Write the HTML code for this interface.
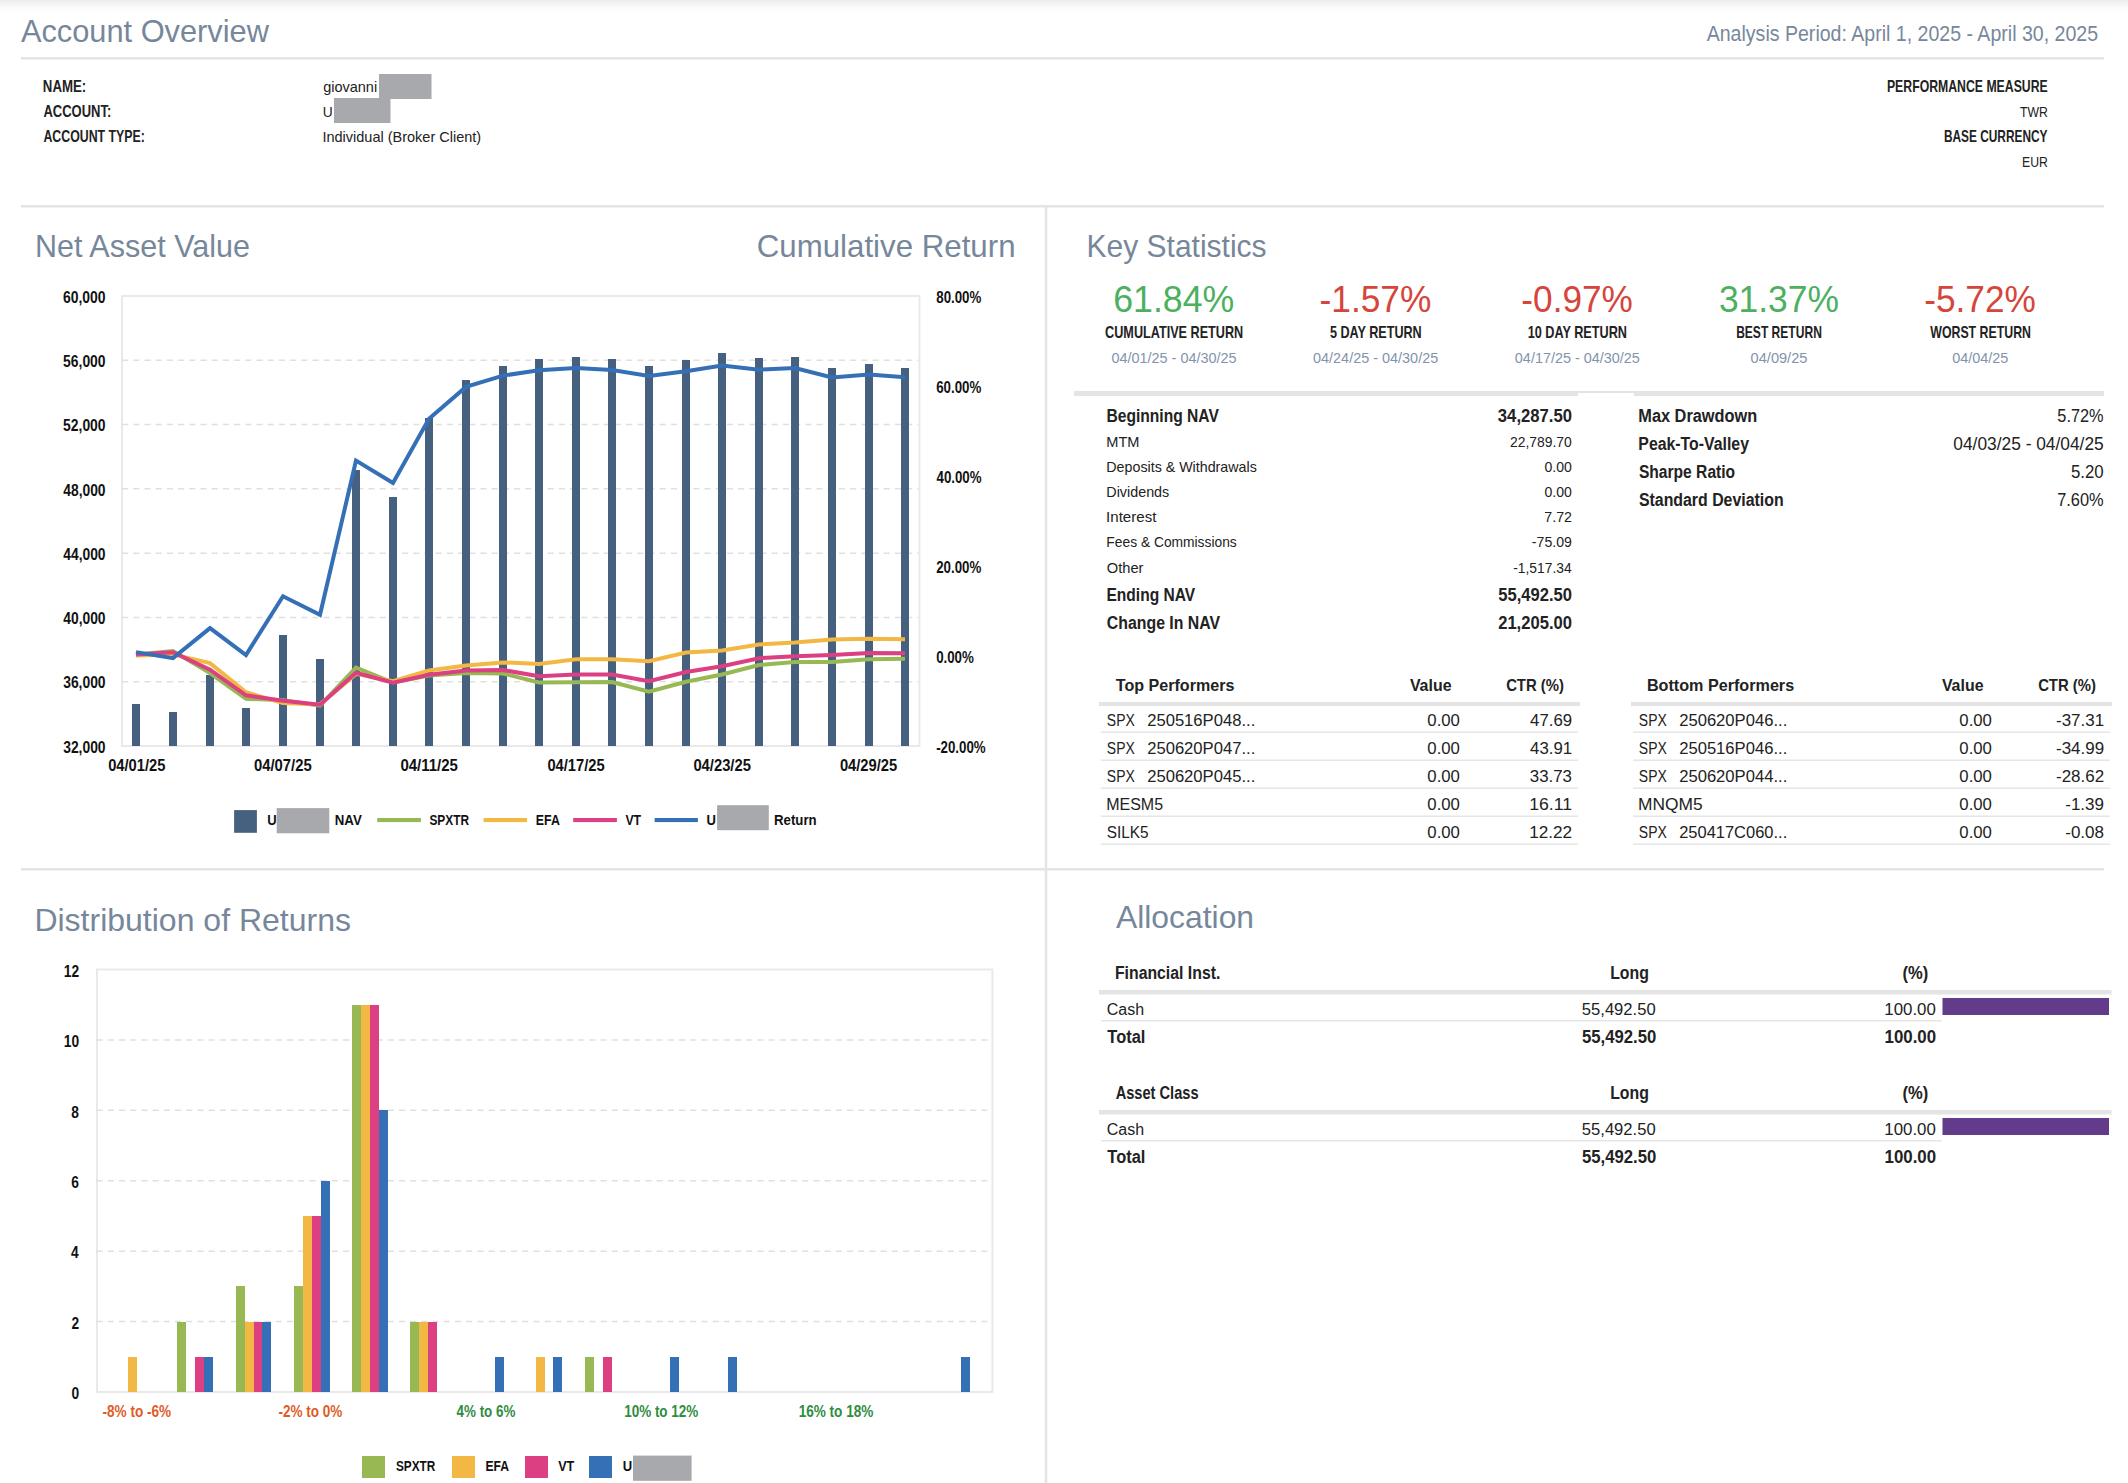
<!DOCTYPE html>
<html><head><meta charset="utf-8"><title>Account Overview</title>
<style>
html,body{margin:0;padding:0;background:#fff;}
body{width:2128px;height:1483px;overflow:hidden;position:relative;}
.shadow{position:absolute;left:0;top:0;width:2128px;height:14px;background:linear-gradient(#ededed,#f5f5f5 30%,#fbfbfb 55%,#ffffff);}
svg{position:absolute;left:0;top:0;}
text{font-family:"Liberation Sans",sans-serif;}
</style></head>
<body>
<div class="shadow"></div>
<svg width="2128" height="1483" viewBox="0 0 2128 1483">
<text x="20.94" y="42.00" font-size="32" fill="#77879b" textLength="247.98" lengthAdjust="spacingAndGlyphs">Account Overview</text>
<text x="1706.71" y="41.00" font-size="21.5" fill="#77879b" textLength="391.35" lengthAdjust="spacingAndGlyphs">Analysis Period: April 1, 2025 - April 30, 2025</text>
<rect x="21.00" y="57.00" width="2083.00" height="2.50" fill="#e4e4e4"/>
<text x="42.86" y="92.00" font-size="16.5" font-weight="bold" fill="#222222" textLength="43.41" lengthAdjust="spacingAndGlyphs">NAME:</text>
<text x="43.43" y="117.00" font-size="16.5" font-weight="bold" fill="#222222" textLength="67.79" lengthAdjust="spacingAndGlyphs">ACCOUNT:</text>
<text x="43.44" y="142.00" font-size="16.5" font-weight="bold" fill="#222222" textLength="101.49" lengthAdjust="spacingAndGlyphs">ACCOUNT TYPE:</text>
<text x="323.14" y="92.00" font-size="14.5" fill="#222222">giovanni</text>
<text x="322.69" y="117.00" font-size="14.5" fill="#222222" textLength="9.95" lengthAdjust="spacingAndGlyphs">U</text>
<text x="322.41" y="142.00" font-size="14.5" fill="#222222">Individual (Broker Client)</text>
<rect x="379.00" y="74.00" width="52.50" height="25.00" fill="#a8a9ac"/>
<rect x="334.00" y="98.00" width="56.50" height="25.00" fill="#a8a9ac"/>
<text x="1886.93" y="92.00" font-size="16.5" font-weight="bold" fill="#222222" textLength="160.80" lengthAdjust="spacingAndGlyphs">PERFORMANCE MEASURE</text>
<text x="2019.98" y="117.00" font-size="14.5" fill="#222222" textLength="27.84" lengthAdjust="spacingAndGlyphs">TWR</text>
<text x="1943.96" y="142.00" font-size="16.5" font-weight="bold" fill="#222222" textLength="103.48" lengthAdjust="spacingAndGlyphs">BASE CURRENCY</text>
<text x="2022.00" y="167.00" font-size="14.5" fill="#222222" textLength="25.82" lengthAdjust="spacingAndGlyphs">EUR</text>
<rect x="21.00" y="205.00" width="2083.00" height="2.50" fill="#e4e4e4"/>
<rect x="1044.75" y="207.00" width="2.50" height="1276.00" fill="#e4e4e4"/>
<rect x="21.00" y="868.00" width="2083.00" height="2.50" fill="#e4e4e4"/>
<text x="35.04" y="257.25" font-size="32" fill="#77879b" textLength="215.04" lengthAdjust="spacingAndGlyphs">Net Asset Value</text>
<text x="756.71" y="257.25" font-size="32" fill="#77879b" textLength="258.82" lengthAdjust="spacingAndGlyphs">Cumulative Return</text>
<rect x="122" y="296" width="797.5" height="450" fill="none" stroke="#e8e8e8" stroke-width="1.9"/>
<line x1="122.00" y1="360.29" x2="918.50" y2="360.29" stroke="#e0e0e0" stroke-width="1.5" stroke-dasharray="6.2 5"/>
<line x1="122.00" y1="424.57" x2="918.50" y2="424.57" stroke="#e0e0e0" stroke-width="1.5" stroke-dasharray="6.2 5"/>
<line x1="122.00" y1="488.86" x2="918.50" y2="488.86" stroke="#e0e0e0" stroke-width="1.5" stroke-dasharray="6.2 5"/>
<line x1="122.00" y1="553.14" x2="918.50" y2="553.14" stroke="#e0e0e0" stroke-width="1.5" stroke-dasharray="6.2 5"/>
<line x1="122.00" y1="617.43" x2="918.50" y2="617.43" stroke="#e0e0e0" stroke-width="1.5" stroke-dasharray="6.2 5"/>
<line x1="122.00" y1="681.71" x2="918.50" y2="681.71" stroke="#e0e0e0" stroke-width="1.5" stroke-dasharray="6.2 5"/>
<text x="62.99" y="302.70" font-size="16" font-weight="bold" fill="#111111" textLength="42.58" lengthAdjust="spacingAndGlyphs">60,000</text>
<text x="63.07" y="366.99" font-size="16" font-weight="bold" fill="#111111" textLength="42.50" lengthAdjust="spacingAndGlyphs">56,000</text>
<text x="63.07" y="431.27" font-size="16" font-weight="bold" fill="#111111" textLength="42.50" lengthAdjust="spacingAndGlyphs">52,000</text>
<text x="63.29" y="495.56" font-size="16" font-weight="bold" fill="#111111" textLength="42.28" lengthAdjust="spacingAndGlyphs">48,000</text>
<text x="63.29" y="559.84" font-size="16" font-weight="bold" fill="#111111" textLength="42.28" lengthAdjust="spacingAndGlyphs">44,000</text>
<text x="63.29" y="624.13" font-size="16" font-weight="bold" fill="#111111" textLength="42.28" lengthAdjust="spacingAndGlyphs">40,000</text>
<text x="63.18" y="688.41" font-size="16" font-weight="bold" fill="#111111" textLength="42.39" lengthAdjust="spacingAndGlyphs">36,000</text>
<text x="63.18" y="752.70" font-size="16" font-weight="bold" fill="#111111" textLength="42.39" lengthAdjust="spacingAndGlyphs">32,000</text>
<text x="936.28" y="302.70" font-size="16" font-weight="bold" fill="#111111" textLength="45.04" lengthAdjust="spacingAndGlyphs">80.00%</text>
<text x="936.21" y="392.70" font-size="16" font-weight="bold" fill="#111111" textLength="45.04" lengthAdjust="spacingAndGlyphs">60.00%</text>
<text x="936.50" y="482.70" font-size="16" font-weight="bold" fill="#111111" textLength="45.04" lengthAdjust="spacingAndGlyphs">40.00%</text>
<text x="936.24" y="572.70" font-size="16" font-weight="bold" fill="#111111" textLength="45.04" lengthAdjust="spacingAndGlyphs">20.00%</text>
<text x="936.17" y="662.70" font-size="16" font-weight="bold" fill="#111111" textLength="37.65" lengthAdjust="spacingAndGlyphs">0.00%</text>
<text x="936.18" y="752.70" font-size="16" font-weight="bold" fill="#111111" textLength="49.46" lengthAdjust="spacingAndGlyphs">-20.00%</text>
<rect x="132.00" y="704.00" width="8.00" height="42.00" fill="#46617f"/>
<rect x="169.00" y="712.00" width="8.00" height="34.00" fill="#46617f"/>
<rect x="206.00" y="675.00" width="8.00" height="71.00" fill="#46617f"/>
<rect x="242.00" y="708.00" width="8.00" height="38.00" fill="#46617f"/>
<rect x="279.00" y="635.00" width="8.00" height="111.00" fill="#46617f"/>
<rect x="316.00" y="659.00" width="8.00" height="87.00" fill="#46617f"/>
<rect x="352.00" y="470.00" width="8.00" height="276.00" fill="#46617f"/>
<rect x="389.00" y="497.00" width="8.00" height="249.00" fill="#46617f"/>
<rect x="425.00" y="418.00" width="8.00" height="328.00" fill="#46617f"/>
<rect x="462.00" y="380.00" width="8.00" height="366.00" fill="#46617f"/>
<rect x="499.00" y="366.00" width="8.00" height="380.00" fill="#46617f"/>
<rect x="535.00" y="359.00" width="8.00" height="387.00" fill="#46617f"/>
<rect x="572.00" y="357.00" width="8.00" height="389.00" fill="#46617f"/>
<rect x="608.00" y="359.00" width="8.00" height="387.00" fill="#46617f"/>
<rect x="645.00" y="366.00" width="8.00" height="380.00" fill="#46617f"/>
<rect x="682.00" y="360.00" width="8.00" height="386.00" fill="#46617f"/>
<rect x="718.00" y="353.00" width="8.00" height="393.00" fill="#46617f"/>
<rect x="755.00" y="358.00" width="8.00" height="388.00" fill="#46617f"/>
<rect x="791.00" y="357.00" width="8.00" height="389.00" fill="#46617f"/>
<rect x="828.00" y="368.00" width="8.00" height="378.00" fill="#46617f"/>
<rect x="865.00" y="364.00" width="8.00" height="382.00" fill="#46617f"/>
<rect x="901.00" y="368.00" width="8.00" height="378.00" fill="#46617f"/>
<polyline points="136.00,654.40 173.00,651.00 210.00,673.10 246.00,698.75 283.00,700.25 320.00,705.60 356.00,667.60 393.00,682.50 429.00,675.60 466.00,673.10 503.00,673.50 539.00,682.50 576.00,682.25 612.00,682.00 649.00,691.75 686.00,681.75 722.00,674.50 759.00,665.00 795.00,662.00 832.00,662.00 869.00,659.25 905.00,658.75" fill="none" stroke="#97b853" stroke-width="4" stroke-linejoin="miter" stroke-miterlimit="10" stroke-linecap="butt"/>
<polyline points="136.00,655.60 173.00,654.40 210.00,663.10 246.00,692.25 283.00,703.10 320.00,704.40 356.00,673.90 393.00,681.25 429.00,670.40 466.00,665.60 503.00,662.40 539.00,663.90 576.00,659.30 612.00,659.25 649.00,661.25 686.00,652.50 722.00,650.50 759.00,644.50 795.00,642.50 832.00,639.50 869.00,638.75 905.00,639.25" fill="none" stroke="#f2b843" stroke-width="4" stroke-linejoin="miter" stroke-miterlimit="10" stroke-linecap="butt"/>
<polyline points="136.00,654.60 173.00,652.25 210.00,669.70 246.00,695.30 283.00,700.75 320.00,704.75 356.00,672.80 393.00,682.80 429.00,674.75 466.00,670.50 503.00,670.00 539.00,676.25 576.00,674.45 612.00,674.50 649.00,681.25 686.00,672.00 722.00,666.25 759.00,658.25 795.00,656.25 832.00,655.00 869.00,653.00 905.00,653.25" fill="none" stroke="#dc3f82" stroke-width="4" stroke-linejoin="miter" stroke-miterlimit="10" stroke-linecap="butt"/>
<polyline points="136.00,652.10 173.00,658.10 210.00,628.10 246.00,655.00 283.00,596.25 320.00,614.75 356.00,460.60 393.00,483.00 429.00,418.75 466.00,386.90 503.00,375.60 539.00,370.25 576.00,368.10 612.00,370.00 649.00,376.00 686.00,371.25 722.00,365.60 759.00,369.75 795.00,368.10 832.00,377.50 869.00,374.40 905.00,377.25" fill="none" stroke="#3570b7" stroke-width="4" stroke-linejoin="miter" stroke-miterlimit="10" stroke-linecap="butt"/>
<text x="108.17" y="770.50" font-size="16" font-weight="bold" fill="#111111" textLength="57.24" lengthAdjust="spacingAndGlyphs">04/01/25</text>
<text x="253.91" y="770.50" font-size="16" font-weight="bold" fill="#111111" textLength="57.75" lengthAdjust="spacingAndGlyphs">04/07/25</text>
<text x="400.42" y="770.50" font-size="16" font-weight="bold" fill="#111111" textLength="57.50" lengthAdjust="spacingAndGlyphs">04/11/25</text>
<text x="547.42" y="770.50" font-size="16" font-weight="bold" fill="#111111" textLength="57.24" lengthAdjust="spacingAndGlyphs">04/17/25</text>
<text x="693.42" y="770.50" font-size="16" font-weight="bold" fill="#111111" textLength="57.50" lengthAdjust="spacingAndGlyphs">04/23/25</text>
<text x="839.92" y="770.50" font-size="16" font-weight="bold" fill="#111111" textLength="57.24" lengthAdjust="spacingAndGlyphs">04/29/25</text>
<rect x="234.10" y="810.10" width="22.80" height="22.70" fill="#46617f"/>
<text x="267.22" y="824.60" font-size="14.5" font-weight="bold" fill="#111111" textLength="9.42" lengthAdjust="spacingAndGlyphs">U</text>
<rect x="276.70" y="808.10" width="52.60" height="25.20" fill="#a8a9ac"/>
<text x="334.74" y="824.60" font-size="14.5" font-weight="bold" fill="#111111" textLength="27.04" lengthAdjust="spacingAndGlyphs">NAV</text>
<rect x="377.20" y="818.00" width="43.70" height="4.10" fill="#97b853"/>
<text x="429.46" y="824.60" font-size="14.5" font-weight="bold" fill="#111111" textLength="39.59" lengthAdjust="spacingAndGlyphs">SPXTR</text>
<rect x="483.60" y="818.00" width="43.40" height="4.10" fill="#f2b843"/>
<text x="535.80" y="824.60" font-size="14.5" font-weight="bold" fill="#111111" textLength="24.02" lengthAdjust="spacingAndGlyphs">EFA</text>
<rect x="573.20" y="818.00" width="43.70" height="4.10" fill="#dc3f82"/>
<text x="625.42" y="824.60" font-size="14.5" font-weight="bold" fill="#111111" textLength="15.72" lengthAdjust="spacingAndGlyphs">VT</text>
<rect x="654.60" y="818.00" width="43.30" height="4.10" fill="#3570b7"/>
<text x="706.42" y="824.60" font-size="14.5" font-weight="bold" fill="#111111" textLength="9.42" lengthAdjust="spacingAndGlyphs">U</text>
<rect x="717.10" y="805.20" width="51.70" height="25.00" fill="#a8a9ac"/>
<text x="774.02" y="824.60" font-size="14.5" font-weight="bold" fill="#111111" textLength="42.60" lengthAdjust="spacingAndGlyphs">Return</text>
<text x="1086.54" y="257.00" font-size="32" fill="#77879b" textLength="180.04" lengthAdjust="spacingAndGlyphs">Key Statistics</text>
<text x="1113.19" y="312.25" font-size="37.5" fill="#4cb060" textLength="121.09" lengthAdjust="spacingAndGlyphs">61.84%</text>
<text x="1105.11" y="338.00" font-size="15.75" font-weight="bold" fill="#222222" textLength="138.11" lengthAdjust="spacingAndGlyphs">CUMULATIVE RETURN</text>
<text x="1111.44" y="363.00" font-size="14.5" fill="#8393ab" textLength="125.17" lengthAdjust="spacingAndGlyphs">04/01/25 - 04/30/25</text>
<text x="1319.53" y="312.25" font-size="37.5" fill="#d6453b" textLength="111.83" lengthAdjust="spacingAndGlyphs">-1.57%</text>
<text x="1329.92" y="338.00" font-size="15.75" font-weight="bold" fill="#222222" textLength="91.82" lengthAdjust="spacingAndGlyphs">5 DAY RETURN</text>
<text x="1313.04" y="363.00" font-size="14.5" fill="#8393ab" textLength="125.17" lengthAdjust="spacingAndGlyphs">04/24/25 - 04/30/25</text>
<text x="1521.36" y="312.25" font-size="37.5" fill="#d6453b" textLength="111.57" lengthAdjust="spacingAndGlyphs">-0.97%</text>
<text x="1527.64" y="338.00" font-size="15.75" font-weight="bold" fill="#222222" textLength="99.38" lengthAdjust="spacingAndGlyphs">10 DAY RETURN</text>
<text x="1514.86" y="363.00" font-size="14.5" fill="#8393ab" textLength="124.92" lengthAdjust="spacingAndGlyphs">04/17/25 - 04/30/25</text>
<text x="1718.90" y="312.25" font-size="37.5" fill="#4cb060" textLength="120.11" lengthAdjust="spacingAndGlyphs">31.37%</text>
<text x="1736.14" y="338.00" font-size="15.75" font-weight="bold" fill="#222222" textLength="85.72" lengthAdjust="spacingAndGlyphs">BEST RETURN</text>
<text x="1750.63" y="363.00" font-size="14.5" fill="#8393ab" textLength="56.78" lengthAdjust="spacingAndGlyphs">04/09/25</text>
<text x="1924.23" y="312.25" font-size="37.5" fill="#d6453b" textLength="111.62" lengthAdjust="spacingAndGlyphs">-5.72%</text>
<text x="1930.24" y="338.00" font-size="15.75" font-weight="bold" fill="#222222" textLength="100.74" lengthAdjust="spacingAndGlyphs">WORST RETURN</text>
<text x="1952.14" y="363.00" font-size="14.5" fill="#8393ab" textLength="56.17" lengthAdjust="spacingAndGlyphs">04/04/25</text>
<rect x="1074.00" y="391.00" width="1030.00" height="2.00" fill="#e4e4e4"/>
<rect x="1074.00" y="391.00" width="504.00" height="5.00" fill="#e4e4e4"/>
<rect x="1634.00" y="391.00" width="470.00" height="5.00" fill="#e4e4e4"/>
<text x="1106.47" y="422.00" font-size="18" font-weight="bold" fill="#222222" textLength="112.39" lengthAdjust="spacingAndGlyphs">Beginning NAV</text>
<text x="1497.87" y="422.00" font-size="18" font-weight="bold" fill="#222222" textLength="74.06" lengthAdjust="spacingAndGlyphs">34,287.50</text>
<text x="1106.31" y="447.00" font-size="14.5" fill="#222222" textLength="33.14" lengthAdjust="spacingAndGlyphs">MTM</text>
<text x="1510.05" y="447.00" font-size="14.5" fill="#222222" textLength="61.74" lengthAdjust="spacingAndGlyphs">22,789.70</text>
<text x="1106.33" y="472.00" font-size="14.5" fill="#222222" textLength="150.43" lengthAdjust="spacingAndGlyphs">Deposits &amp; Withdrawals</text>
<text x="1544.45" y="472.00" font-size="14.5" fill="#222222" textLength="27.35" lengthAdjust="spacingAndGlyphs">0.00</text>
<text x="1106.32" y="497.00" font-size="14.5" fill="#222222" textLength="62.94" lengthAdjust="spacingAndGlyphs">Dividends</text>
<text x="1544.45" y="497.00" font-size="14.5" fill="#222222" textLength="27.35" lengthAdjust="spacingAndGlyphs">0.00</text>
<text x="1106.11" y="522.00" font-size="14.5" fill="#222222" textLength="50.25" lengthAdjust="spacingAndGlyphs">Interest</text>
<text x="1544.27" y="522.00" font-size="14.5" fill="#222222" textLength="27.70" lengthAdjust="spacingAndGlyphs">7.72</text>
<text x="1106.37" y="547.00" font-size="14.5" fill="#222222" textLength="130.38" lengthAdjust="spacingAndGlyphs">Fees &amp; Commissions</text>
<text x="1531.87" y="547.00" font-size="14.5" fill="#222222" textLength="40.05" lengthAdjust="spacingAndGlyphs">-75.09</text>
<text x="1106.81" y="573.00" font-size="14.5" fill="#222222" textLength="36.69" lengthAdjust="spacingAndGlyphs">Other</text>
<text x="1513.13" y="573.00" font-size="14.5" fill="#222222" textLength="58.52" lengthAdjust="spacingAndGlyphs">-1,517.34</text>
<text x="1106.47" y="601.00" font-size="18" font-weight="bold" fill="#222222" textLength="88.63" lengthAdjust="spacingAndGlyphs">Ending NAV</text>
<text x="1498.24" y="601.00" font-size="18" font-weight="bold" fill="#222222" textLength="73.69" lengthAdjust="spacingAndGlyphs">55,492.50</text>
<text x="1106.86" y="629.00" font-size="18" font-weight="bold" fill="#222222" textLength="113.25" lengthAdjust="spacingAndGlyphs">Change In NAV</text>
<text x="1498.18" y="629.00" font-size="18" font-weight="bold" fill="#222222" textLength="73.75" lengthAdjust="spacingAndGlyphs">21,205.00</text>
<text x="1638.31" y="422.00" font-size="18" font-weight="bold" fill="#222222" textLength="118.91" lengthAdjust="spacingAndGlyphs">Max Drawdown</text>
<text x="2057.35" y="422.00" font-size="17.5" fill="#222222" textLength="46.23" lengthAdjust="spacingAndGlyphs">5.72%</text>
<text x="1638.36" y="450.00" font-size="18" font-weight="bold" fill="#222222" textLength="110.62" lengthAdjust="spacingAndGlyphs">Peak-To-Valley</text>
<text x="1953.32" y="450.00" font-size="17.5" fill="#222222" textLength="150.41" lengthAdjust="spacingAndGlyphs">04/03/25 - 04/04/25</text>
<text x="1638.95" y="478.00" font-size="18" font-weight="bold" fill="#222222" textLength="96.16" lengthAdjust="spacingAndGlyphs">Sharpe Ratio</text>
<text x="2070.93" y="478.00" font-size="17.5" fill="#222222" textLength="32.73" lengthAdjust="spacingAndGlyphs">5.20</text>
<text x="1638.94" y="506.00" font-size="18" font-weight="bold" fill="#222222" textLength="144.64" lengthAdjust="spacingAndGlyphs">Standard Deviation</text>
<text x="2057.16" y="506.00" font-size="17.5" fill="#222222" textLength="46.42" lengthAdjust="spacingAndGlyphs">7.60%</text>
<text x="1115.82" y="690.50" font-size="16.5" font-weight="bold" fill="#222222" textLength="118.58" lengthAdjust="spacingAndGlyphs">Top Performers</text>
<text x="1409.89" y="690.50" font-size="16.5" font-weight="bold" fill="#222222" textLength="41.64" lengthAdjust="spacingAndGlyphs">Value</text>
<text x="1506.14" y="690.50" font-size="16.5" font-weight="bold" fill="#222222" textLength="57.85" lengthAdjust="spacingAndGlyphs">CTR (%)</text>
<rect x="1099.00" y="702.00" width="481.00" height="4.00" fill="#e4e4e4"/>
<text x="1106.87" y="726.00" font-size="16" fill="#222222" textLength="27.93" lengthAdjust="spacingAndGlyphs">SPX</text>
<text x="1147.16" y="726.00" font-size="16" fill="#222222" textLength="108.10" lengthAdjust="spacingAndGlyphs">250516P048...</text>
<text x="1427.35" y="726.00" font-size="16" fill="#222222" textLength="32.56" lengthAdjust="spacingAndGlyphs">0.00</text>
<text x="1530.12" y="726.00" font-size="16" fill="#222222" textLength="41.93" lengthAdjust="spacingAndGlyphs">47.69</text>
<rect x="1101.00" y="731.50" width="477.00" height="1.50" fill="#e6e6e6"/>
<text x="1106.87" y="754.00" font-size="16" fill="#222222" textLength="27.93" lengthAdjust="spacingAndGlyphs">SPX</text>
<text x="1147.16" y="754.00" font-size="16" fill="#222222" textLength="108.10" lengthAdjust="spacingAndGlyphs">250620P047...</text>
<text x="1427.35" y="754.00" font-size="16" fill="#222222" textLength="32.56" lengthAdjust="spacingAndGlyphs">0.00</text>
<text x="1530.12" y="754.00" font-size="16" fill="#222222" textLength="41.95" lengthAdjust="spacingAndGlyphs">43.91</text>
<rect x="1101.00" y="759.50" width="477.00" height="1.50" fill="#e6e6e6"/>
<text x="1106.87" y="782.00" font-size="16" fill="#222222" textLength="27.93" lengthAdjust="spacingAndGlyphs">SPX</text>
<text x="1147.16" y="782.00" font-size="16" fill="#222222" textLength="108.10" lengthAdjust="spacingAndGlyphs">250620P045...</text>
<text x="1427.35" y="782.00" font-size="16" fill="#222222" textLength="32.56" lengthAdjust="spacingAndGlyphs">0.00</text>
<text x="1529.86" y="782.00" font-size="16" fill="#222222" textLength="42.13" lengthAdjust="spacingAndGlyphs">33.73</text>
<rect x="1101.00" y="787.50" width="477.00" height="1.50" fill="#e6e6e6"/>
<text x="1106.19" y="810.00" font-size="16" fill="#222222">MESM5</text>
<text x="1427.35" y="810.00" font-size="16" fill="#222222" textLength="32.56" lengthAdjust="spacingAndGlyphs">0.00</text>
<text x="1529.19" y="810.00" font-size="16" fill="#222222" textLength="42.89" lengthAdjust="spacingAndGlyphs">16.11</text>
<rect x="1101.00" y="815.50" width="477.00" height="1.50" fill="#e6e6e6"/>
<text x="1106.80" y="838.00" font-size="16" fill="#222222" textLength="41.84" lengthAdjust="spacingAndGlyphs">SILK5</text>
<text x="1427.35" y="838.00" font-size="16" fill="#222222" textLength="32.56" lengthAdjust="spacingAndGlyphs">0.00</text>
<text x="1529.19" y="838.00" font-size="16" fill="#222222" textLength="42.92" lengthAdjust="spacingAndGlyphs">12.22</text>
<rect x="1101.00" y="843.50" width="477.00" height="1.50" fill="#e6e6e6"/>
<text x="1646.92" y="690.50" font-size="16.5" font-weight="bold" fill="#222222" textLength="147.24" lengthAdjust="spacingAndGlyphs">Bottom Performers</text>
<text x="1941.89" y="690.50" font-size="16.5" font-weight="bold" fill="#222222" textLength="41.64" lengthAdjust="spacingAndGlyphs">Value</text>
<text x="2038.14" y="690.50" font-size="16.5" font-weight="bold" fill="#222222" textLength="57.85" lengthAdjust="spacingAndGlyphs">CTR (%)</text>
<rect x="1631.00" y="702.00" width="481.00" height="4.00" fill="#e4e4e4"/>
<text x="1638.87" y="726.00" font-size="16" fill="#222222" textLength="27.93" lengthAdjust="spacingAndGlyphs">SPX</text>
<text x="1679.16" y="726.00" font-size="16" fill="#222222" textLength="108.10" lengthAdjust="spacingAndGlyphs">250620P046...</text>
<text x="1959.35" y="726.00" font-size="16" fill="#222222" textLength="32.56" lengthAdjust="spacingAndGlyphs">0.00</text>
<text x="2056.00" y="726.00" font-size="16" fill="#222222" textLength="48.08" lengthAdjust="spacingAndGlyphs">-37.31</text>
<rect x="1633.00" y="731.50" width="477.00" height="1.50" fill="#e6e6e6"/>
<text x="1638.87" y="754.00" font-size="16" fill="#222222" textLength="27.93" lengthAdjust="spacingAndGlyphs">SPX</text>
<text x="1679.16" y="754.00" font-size="16" fill="#222222" textLength="108.10" lengthAdjust="spacingAndGlyphs">250516P046...</text>
<text x="1959.35" y="754.00" font-size="16" fill="#222222" textLength="32.56" lengthAdjust="spacingAndGlyphs">0.00</text>
<text x="2056.00" y="754.00" font-size="16" fill="#222222" textLength="48.06" lengthAdjust="spacingAndGlyphs">-34.99</text>
<rect x="1633.00" y="759.50" width="477.00" height="1.50" fill="#e6e6e6"/>
<text x="1638.87" y="782.00" font-size="16" fill="#222222" textLength="27.93" lengthAdjust="spacingAndGlyphs">SPX</text>
<text x="1679.16" y="782.00" font-size="16" fill="#222222" textLength="108.10" lengthAdjust="spacingAndGlyphs">250620P044...</text>
<text x="1959.35" y="782.00" font-size="16" fill="#222222" textLength="32.56" lengthAdjust="spacingAndGlyphs">0.00</text>
<text x="2056.00" y="782.00" font-size="16" fill="#222222" textLength="48.11" lengthAdjust="spacingAndGlyphs">-28.62</text>
<rect x="1633.00" y="787.50" width="477.00" height="1.50" fill="#e6e6e6"/>
<text x="1638.08" y="810.00" font-size="16" fill="#222222" textLength="64.65" lengthAdjust="spacingAndGlyphs">MNQM5</text>
<text x="1959.35" y="810.00" font-size="16" fill="#222222" textLength="32.56" lengthAdjust="spacingAndGlyphs">0.00</text>
<text x="2065.24" y="810.00" font-size="16" fill="#222222" textLength="38.81" lengthAdjust="spacingAndGlyphs">-1.39</text>
<rect x="1633.00" y="815.50" width="477.00" height="1.50" fill="#e6e6e6"/>
<text x="1638.87" y="838.00" font-size="16" fill="#222222" textLength="27.93" lengthAdjust="spacingAndGlyphs">SPX</text>
<text x="1679.17" y="838.00" font-size="16" fill="#222222" textLength="108.08" lengthAdjust="spacingAndGlyphs">250417C060...</text>
<text x="1959.35" y="838.00" font-size="16" fill="#222222" textLength="32.56" lengthAdjust="spacingAndGlyphs">0.00</text>
<text x="2065.24" y="838.00" font-size="16" fill="#222222" textLength="38.74" lengthAdjust="spacingAndGlyphs">-0.08</text>
<rect x="1633.00" y="843.50" width="477.00" height="1.50" fill="#e6e6e6"/>
<text x="1115.94" y="928.00" font-size="32" fill="#77879b" textLength="138.13" lengthAdjust="spacingAndGlyphs">Allocation</text>
<text x="1114.94" y="979.00" font-size="17.5" font-weight="bold" fill="#222222" textLength="105.40" lengthAdjust="spacingAndGlyphs">Financial Inst.</text>
<text x="1610.14" y="979.00" font-size="17.5" font-weight="bold" fill="#222222" textLength="38.72" lengthAdjust="spacingAndGlyphs">Long</text>
<text x="1902.48" y="979.00" font-size="17.5" font-weight="bold" fill="#222222" textLength="25.75" lengthAdjust="spacingAndGlyphs">(%)</text>
<rect x="1099.00" y="990.00" width="1012.60" height="4.50" fill="#e4e4e4"/>
<text x="1106.69" y="1015.00" font-size="16" fill="#222222">Cash</text>
<text x="1581.84" y="1015.00" font-size="16" fill="#222222" textLength="73.81" lengthAdjust="spacingAndGlyphs">55,492.50</text>
<text x="1884.32" y="1015.00" font-size="16" fill="#222222" textLength="51.54" lengthAdjust="spacingAndGlyphs">100.00</text>
<rect x="1942.50" y="998.00" width="166.50" height="17.00" fill="#623b8b"/>
<rect x="1101.00" y="1020.00" width="840.70" height="1.50" fill="#e6e6e6"/>
<text x="1107.32" y="1043.00" font-size="17.5" font-weight="bold" fill="#222222" textLength="38.06" lengthAdjust="spacingAndGlyphs">Total</text>
<text x="1581.99" y="1043.00" font-size="17.5" font-weight="bold" fill="#222222" textLength="74.30" lengthAdjust="spacingAndGlyphs">55,492.50</text>
<text x="1884.54" y="1043.00" font-size="17.5" font-weight="bold" fill="#222222" textLength="51.55" lengthAdjust="spacingAndGlyphs">100.00</text>
<text x="1115.64" y="1099.00" font-size="17.5" font-weight="bold" fill="#222222" textLength="82.96" lengthAdjust="spacingAndGlyphs">Asset Class</text>
<text x="1610.14" y="1099.00" font-size="17.5" font-weight="bold" fill="#222222" textLength="38.72" lengthAdjust="spacingAndGlyphs">Long</text>
<text x="1902.48" y="1099.00" font-size="17.5" font-weight="bold" fill="#222222" textLength="25.75" lengthAdjust="spacingAndGlyphs">(%)</text>
<rect x="1099.00" y="1110.00" width="1012.60" height="4.50" fill="#e4e4e4"/>
<text x="1106.69" y="1135.00" font-size="16" fill="#222222">Cash</text>
<text x="1581.84" y="1135.00" font-size="16" fill="#222222" textLength="73.81" lengthAdjust="spacingAndGlyphs">55,492.50</text>
<text x="1884.32" y="1135.00" font-size="16" fill="#222222" textLength="51.54" lengthAdjust="spacingAndGlyphs">100.00</text>
<rect x="1942.50" y="1118.00" width="166.50" height="17.00" fill="#623b8b"/>
<rect x="1101.00" y="1140.00" width="840.70" height="1.50" fill="#e6e6e6"/>
<text x="1107.32" y="1163.00" font-size="17.5" font-weight="bold" fill="#222222" textLength="38.06" lengthAdjust="spacingAndGlyphs">Total</text>
<text x="1581.99" y="1163.00" font-size="17.5" font-weight="bold" fill="#222222" textLength="74.30" lengthAdjust="spacingAndGlyphs">55,492.50</text>
<text x="1884.54" y="1163.00" font-size="17.5" font-weight="bold" fill="#222222" textLength="51.55" lengthAdjust="spacingAndGlyphs">100.00</text>
<text x="34.38" y="931.00" font-size="32" fill="#77879b">Distribution of Returns</text>
<rect x="97.0" y="969.5" width="895.4" height="422.5" fill="none" stroke="#e8e8e8" stroke-width="1.9"/>
<line x1="96.50" y1="1321.58" x2="987.40" y2="1321.58" stroke="#e0e0e0" stroke-width="1.5" stroke-dasharray="6.2 5"/>
<line x1="96.50" y1="1251.17" x2="987.40" y2="1251.17" stroke="#e0e0e0" stroke-width="1.5" stroke-dasharray="6.2 5"/>
<line x1="96.50" y1="1180.75" x2="987.40" y2="1180.75" stroke="#e0e0e0" stroke-width="1.5" stroke-dasharray="6.2 5"/>
<line x1="96.50" y1="1110.33" x2="987.40" y2="1110.33" stroke="#e0e0e0" stroke-width="1.5" stroke-dasharray="6.2 5"/>
<line x1="96.50" y1="1039.92" x2="987.40" y2="1039.92" stroke="#e0e0e0" stroke-width="1.5" stroke-dasharray="6.2 5"/>
<text x="71.41" y="1399.30" font-size="16" font-weight="bold" fill="#111111" textLength="7.65" lengthAdjust="spacingAndGlyphs">0</text>
<text x="71.40" y="1328.88" font-size="16" font-weight="bold" fill="#111111" textLength="7.65" lengthAdjust="spacingAndGlyphs">2</text>
<text x="70.92" y="1258.47" font-size="16" font-weight="bold" fill="#111111" textLength="7.65" lengthAdjust="spacingAndGlyphs">4</text>
<text x="71.34" y="1188.05" font-size="16" font-weight="bold" fill="#111111" textLength="7.65" lengthAdjust="spacingAndGlyphs">6</text>
<text x="71.27" y="1117.63" font-size="16" font-weight="bold" fill="#111111" textLength="7.65" lengthAdjust="spacingAndGlyphs">8</text>
<text x="63.76" y="1047.22" font-size="16" font-weight="bold" fill="#111111" textLength="15.31" lengthAdjust="spacingAndGlyphs">10</text>
<text x="63.75" y="976.80" font-size="16" font-weight="bold" fill="#111111" textLength="15.31" lengthAdjust="spacingAndGlyphs">12</text>
<rect x="128.00" y="1357.00" width="9.00" height="35.00" fill="#f2b843"/>
<rect x="177.00" y="1322.00" width="9.00" height="70.00" fill="#97b853"/>
<rect x="195.00" y="1357.00" width="9.00" height="35.00" fill="#dc3f82"/>
<rect x="204.00" y="1357.00" width="9.00" height="35.00" fill="#3570b7"/>
<rect x="236.00" y="1286.00" width="9.00" height="106.00" fill="#97b853"/>
<rect x="245.00" y="1322.00" width="9.00" height="70.00" fill="#f2b843"/>
<rect x="254.00" y="1322.00" width="8.00" height="70.00" fill="#dc3f82"/>
<rect x="262.00" y="1322.00" width="9.00" height="70.00" fill="#3570b7"/>
<rect x="294.00" y="1286.00" width="9.00" height="106.00" fill="#97b853"/>
<rect x="303.00" y="1216.00" width="9.00" height="176.00" fill="#f2b843"/>
<rect x="312.00" y="1216.00" width="9.00" height="176.00" fill="#dc3f82"/>
<rect x="321.00" y="1181.00" width="9.00" height="211.00" fill="#3570b7"/>
<rect x="352.00" y="1005.00" width="9.00" height="387.00" fill="#97b853"/>
<rect x="361.00" y="1005.00" width="9.00" height="387.00" fill="#f2b843"/>
<rect x="370.00" y="1005.00" width="9.00" height="387.00" fill="#dc3f82"/>
<rect x="379.00" y="1110.00" width="9.00" height="282.00" fill="#3570b7"/>
<rect x="410.00" y="1322.00" width="9.00" height="70.00" fill="#97b853"/>
<rect x="419.00" y="1322.00" width="9.00" height="70.00" fill="#f2b843"/>
<rect x="428.00" y="1322.00" width="9.00" height="70.00" fill="#dc3f82"/>
<rect x="495.00" y="1357.00" width="9.00" height="35.00" fill="#3570b7"/>
<rect x="536.00" y="1357.00" width="9.00" height="35.00" fill="#f2b843"/>
<rect x="553.00" y="1357.00" width="9.00" height="35.00" fill="#3570b7"/>
<rect x="585.00" y="1357.00" width="9.00" height="35.00" fill="#97b853"/>
<rect x="603.00" y="1357.00" width="9.00" height="35.00" fill="#dc3f82"/>
<rect x="670.00" y="1357.00" width="9.00" height="35.00" fill="#3570b7"/>
<rect x="728.00" y="1357.00" width="9.00" height="35.00" fill="#3570b7"/>
<rect x="961.00" y="1357.00" width="9.00" height="35.00" fill="#3570b7"/>
<text x="102.47" y="1417.00" font-size="16.5" font-weight="bold" fill="#dd5c26" textLength="68.64" lengthAdjust="spacingAndGlyphs">-8% to -6%</text>
<text x="278.47" y="1417.00" font-size="16.5" font-weight="bold" fill="#dd5c26" textLength="63.88" lengthAdjust="spacingAndGlyphs">-2% to 0%</text>
<text x="456.55" y="1417.00" font-size="16.5" font-weight="bold" fill="#2f8c40" textLength="58.81" lengthAdjust="spacingAndGlyphs">4% to 6%</text>
<text x="624.15" y="1417.00" font-size="16.5" font-weight="bold" fill="#2f8c40" textLength="74.21" lengthAdjust="spacingAndGlyphs">10% to 12%</text>
<text x="798.64" y="1417.00" font-size="16.5" font-weight="bold" fill="#2f8c40" textLength="74.71" lengthAdjust="spacingAndGlyphs">16% to 18%</text>
<rect x="362.00" y="1456.00" width="23.00" height="22.00" fill="#97b853"/>
<text x="395.91" y="1471.00" font-size="14.5" font-weight="bold" fill="#111111" textLength="39.33" lengthAdjust="spacingAndGlyphs">SPXTR</text>
<rect x="452.00" y="1456.00" width="23.00" height="22.00" fill="#f2b843"/>
<text x="485.46" y="1471.00" font-size="14.5" font-weight="bold" fill="#111111" textLength="23.60" lengthAdjust="spacingAndGlyphs">EFA</text>
<rect x="525.00" y="1456.00" width="23.00" height="22.00" fill="#dc3f82"/>
<text x="558.21" y="1471.00" font-size="14.5" font-weight="bold" fill="#111111" textLength="16.12" lengthAdjust="spacingAndGlyphs">VT</text>
<rect x="589.00" y="1456.00" width="23.00" height="22.00" fill="#3570b7"/>
<text x="622.72" y="1471.00" font-size="14.5" font-weight="bold" fill="#111111" textLength="9.42" lengthAdjust="spacingAndGlyphs">U</text>
<rect x="633.00" y="1455.60" width="58.60" height="25.20" fill="#a8a9ac"/>
</svg>
</body></html>
